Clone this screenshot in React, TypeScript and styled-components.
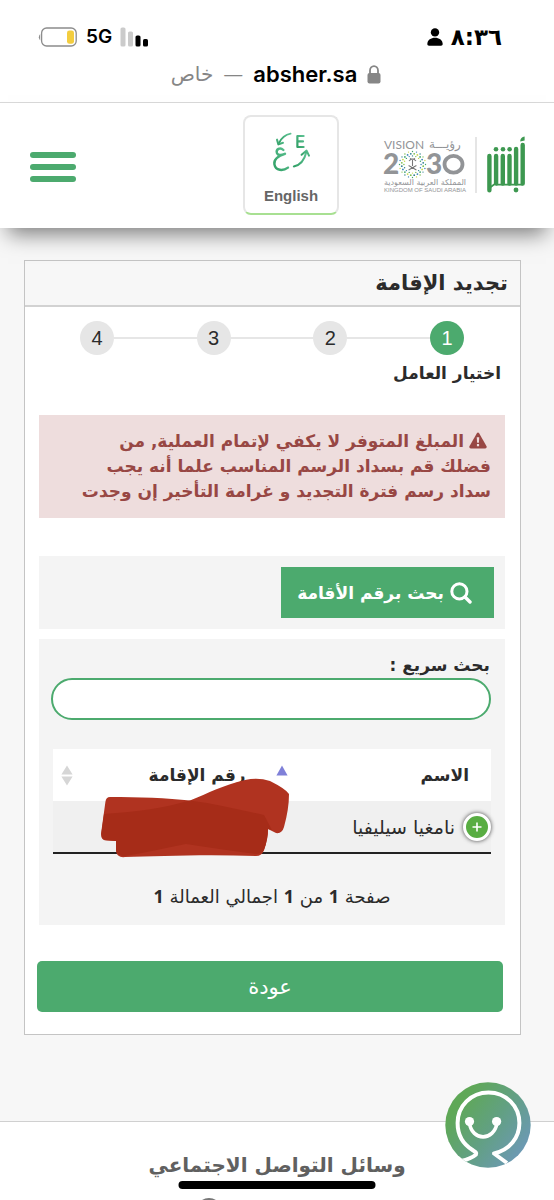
import React from "react";
import styled, { createGlobalStyle } from "styled-components";

const GREEN = "#4caa6e";
const ARABIC = `"DejaVu Sans", "Noto Sans", sans-serif`;

const GlobalStyle = createGlobalStyle`
  * { box-sizing: border-box; }
  body { margin: 0; background: #f7f7f7; color: #2b2b2b; font-family: ${ARABIC}; }
  button, input { font-family: inherit; margin: 0; }
  h1, h2, p, ol { margin: 0; padding: 0; }
`;

const Screen = styled.div`
  height: 100vh;
  overflow: hidden;
  display: flex;
  flex-direction: column;
`;

const BrowserBar = styled.div`
  direction: ltr;
  background: #fff;
  padding: 24px 52px 14px 38px;
  border-bottom: 1px solid #d9d9d9;
  flex: none;
`;

const StatusRow = styled.div`
  display: flex;
  align-items: center;
  justify-content: space-between;
  height: 26px;
`;

const StatusGroup = styled.div`
  display: flex;
  align-items: center;
  gap: 8px;
  color: #000;
`;

const Network = styled.span`
  font: 600 19px/24px Inter, sans-serif;
`;

const Clock = styled.time`
  font: 700 23px/24px ${ARABIC};
`;

const Address = styled.div`
  display: flex;
  align-items: center;
  justify-content: center;
  gap: 10px;
  height: 28px;
  margin-top: 10px;
  padding-left: 12px;
  color: #868686;
  font-size: 20px;
`;

const Host = styled.span`
  font: 600 22px/28px Inter, sans-serif;
  color: #000;
`;

const Header = styled.header`
  position: relative;
  z-index: 2;
  flex: none;
  display: flex;
  align-items: center;
  justify-content: space-between;
  padding: 12px 29px 13px 30px;
  background: #fff;
  box-shadow: 0 14px 20px -8px rgba(0, 0, 0, 0.5);
`;

const Logos = styled.a`
  display: flex;
  align-items: center;
  width: 142px;
  text-decoration: none;
`;

const LanguageButton = styled.button`
  display: flex;
  flex-direction: column;
  align-items: center;
  justify-content: space-between;
  width: 96px;
  height: 100px;
  padding: 14px 0 8px;
  background: #fff;
  border: 2px solid #e6e6e6;
  border-bottom-color: #a8e092;
  border-radius: 8px;
  color: #666;
  font: 700 15px/18px "Liberation Sans", sans-serif;
`;

const MenuSlot = styled.div`
  width: 169px;
  padding-top: 3px;
  display: flex;
  justify-content: flex-end;
`;

const MenuButton = styled.button`
  display: flex;
  flex-direction: column;
  gap: 6px;
  padding: 0;
  border: 0;
  background: none;
`;

const MenuBar = styled.span`
  width: 46px;
  height: 6px;
  border-radius: 3px;
  background: ${GREEN};
`;

const Main = styled.main`
  flex: none;
  padding: 32px 33px 86px 24px;
`;

const Card = styled.section`
  background: #fff;
  border: 1px solid #c4c4c4;
`;

const CardTitle = styled.h1`
  padding: 0 12px;
  background: #f7f7f7;
  border-bottom: 2px solid #d2d2d2;
  font-size: 21px;
  line-height: 44px;
  font-weight: 700;
`;

const CardBody = styled.div`
  padding: 14px 15px 22px 14px;
`;

const Steps = styled.ol`
  display: flex;
  align-items: center;
  padding: 0 41px;
  list-style: none;
`;

const Step = styled.li<{ $current?: boolean }>`
  display: flex;
  align-items: center;
  flex: 1;
  &:first-child { flex: none; }
  &:not(:first-child)::before {
    content: "";
    flex: 1;
    height: 2px;
    background: #e6e6e6;
  }
  span {
    width: 34px;
    border-radius: 50%;
    text-align: center;
    font: 400 20px/34px "Liberation Sans", sans-serif;
    background: ${(p) => (p.$current ? GREEN : "#e6e6e6")};
    color: ${(p) => (p.$current ? "#fff" : "#2b2b2b")};
  }
`;

const StepLabel = styled.p`
  margin-top: 6px;
  padding: 0 4px;
  font-size: 17px;
  line-height: 24px;
  font-weight: 700;
`;

const Alert = styled.div`
  margin-top: 30px;
  padding: 14px 14px 14px 28px;
  background: #eedddd;
  color: #984744;
  font-size: 17px;
  line-height: 25px;
  font-weight: 700;
  svg { vertical-align: -2px; margin: 0 4px 0 5px; }
`;

const Panel = styled.div<{ $gap: number }>`
  margin-top: ${(p) => p.$gap}px;
  padding: 11px;
  background: #f4f4f4;
`;

const SearchButton = styled.button`
  display: flex;
  align-items: center;
  justify-content: center;
  gap: 6px;
  width: 213px;
  height: 51px;
  padding: 0 6px 0 0;
  border: 0;
  background: ${GREEN};
  color: #fff;
  font-size: 17px;
  font-weight: 700;
`;

const FieldLabel = styled.label`
  display: block;
  padding: 3px 4px 1px;
  font-size: 17px;
  line-height: 24px;
  font-weight: 700;
`;

const QuickSearch = styled.input`
  display: block;
  width: calc(100% - 4px);
  height: 42px;
  margin-right: 3px;
  padding: 0 20px;
  border: 2px solid ${GREEN};
  border-radius: 21px;
  background: #fff;
  font-size: 17px;
`;

const TableWrap = styled.div`
  position: relative;
  margin: 29px 3px 0;
`;

const Table = styled.table`
  width: 100%;
  table-layout: fixed;
  border-collapse: collapse;
  border-bottom: 2px solid #222;
  background: #f0f0f0;
  th {
    height: 52px;
    padding: 0 22px 0 8px;
    background: #fff;
    font-size: 17px;
    text-align: right;
  }
  th:first-child { width: 51%; }
  td {
    height: 52px;
    padding: 0;
    font-size: 19px;
  }
`;

const HeadCell = styled.div`
  display: flex;
  align-items: center;
  justify-content: space-between;
  white-space: nowrap;
`;

const NameCell = styled.div`
  display: flex;
  align-items: center;
  gap: 8px;
  white-space: nowrap;
`;

const ExpandButton = styled.button`
  display: grid;
  place-items: center;
  width: 28px;
  height: 28px;
  padding: 0;
  border: 3px solid #fff;
  border-radius: 50%;
  background: #58ad42;
  box-shadow: 0 0 4px #444;
`;

const Scribble = styled.svg`
  position: absolute;
  left: 45px;
  top: 28px;
`;

const PageCount = styled.p`
  padding: 28px 0 3px;
  font-size: 18px;
  line-height: 28px;
  text-align: center;
  b { font-family: "Noto Sans", sans-serif; }
`;

const BackButton = styled.button`
  display: block;
  width: 100%;
  height: 51px;
  margin: 36px 2px 0;
  border: 0;
  border-radius: 5px;
  background: ${GREEN};
  color: #fff;
  font-size: 21px;
`;

const Footer = styled.footer`
  flex: 1 0 auto;
  display: flex;
  flex-direction: column;
  align-items: center;
  gap: 16px;
  padding: 26px 20px 0;
  background: #fff;
  border-top: 1px solid #d0d0d0;
`;

const FooterTitle = styled.h2`
  color: #606060;
  font-size: 20px;
  line-height: 34px;
  font-weight: 700;
`;

const SocialLink = styled.a`
  width: 26px;
  height: 26px;
  margin-right: 136px;
  border: 2px solid #777;
  border-radius: 50%;
`;

const ChatButton = styled.button`
  position: fixed;
  right: 23px;
  bottom: 32px;
  z-index: 3;
  padding: 0;
  border: 0;
  background: none;
  svg { display: block; }
`;

const HomeIndicator = styled.div`
  position: fixed;
  left: 50%;
  bottom: 11px;
  z-index: 3;
  width: 197px;
  height: 8px;
  border-radius: 4px;
  background: #000;
  transform: translateX(-50%);
`;

const Battery = () => (
  <svg width="40" height="20" viewBox="0 0 40 20" aria-hidden="true">
    <rect x="3.6" y="1" width="34.6" height="18" rx="5" fill="none" stroke="#8c8c8c" strokeWidth="1.3" />
    <path d="M2.2 7 A5 5 0 0 0 2.2 13.4 Z" fill="#8c8c8c" />
    <rect x="29" y="3.4" width="7" height="13.4" rx="2.4" fill="#f3cd3f" />
  </svg>
);

const Signal = () => (
  <svg width="29" height="20" viewBox="0 0 29 20" aria-hidden="true">
    <rect x="0.5" y="0.5" width="5" height="19" rx="1.6" fill="#cbcbcb" />
    <rect x="8" y="4.5" width="5" height="15" rx="1.6" fill="#cbcbcb" />
    <rect x="15.5" y="8.5" width="5" height="11" rx="1.6" fill="#000" />
    <rect x="23" y="12" width="5" height="7.5" rx="1.6" fill="#000" />
  </svg>
);

const Person = () => (
  <svg width="16" height="18" viewBox="0 0 16 18" aria-hidden="true">
    <circle cx="8" cy="4.4" r="4.2" />
    <path d="M0.3 16 C0.3 7.5 15.7 7.5 15.7 16 C15.7 17.3 15 17.7 14 17.7 H2 C1 17.7 0.3 17.3 0.3 16 Z" />
  </svg>
);

const Lock = () => (
  <svg width="14" height="19" viewBox="0 0 14 19" aria-hidden="true">
    <rect x="0.5" y="8" width="13" height="10.5" rx="2" fill="#868686" />
    <path d="M3 9 V5.5 A4 4.4 0 0 1 11 5.5 V9" fill="none" stroke="#868686" strokeWidth="1.8" />
  </svg>
);

const AbsherLogo = () => (
  <svg width="38" height="58" viewBox="0 0 38 58" role="img" aria-label="أبشر">
    <g stroke="#3d9850" strokeWidth="4.4" strokeLinecap="round">
      <path d="M2.4 20 V54.2 M9.1 20 V47.6 M15.8 20 V47.6 M22.5 20 V47.6 M29.1 13 V47.6 M35.7 9 V47.6" />
    </g>
    <path d="M2.4 52 L9.1 47 M9.1 48.6 H35.7" stroke="#3d9850" strokeWidth="1.6" />
    <g fill="#3d9850">
      <circle cx="9" cy="13.2" r="2.3" />
      <circle cx="16" cy="13.2" r="2.3" />
      <circle cx="22.6" cy="13.2" r="2.3" />
      <circle cx="29" cy="54" r="2.4" />
      <path d="M33.2 5.2 C33.2 2.8 35 1 37.6 0.6 V4.4 L33.2 5.6 Z" />
    </g>
  </svg>
);

const DOT_COLORS = ["#3fa36b", "#7bbf4c", "#3b82b5", "#c9d64a", "#2f7f8f"];
const rosette = [
  { r: 13, n: 20, size: 0.7 },
  { r: 10.8, n: 20, size: 0.9 },
  { r: 8.6, n: 16, size: 0.7 },
].flatMap((ring, k) =>
  Array.from({ length: ring.n }, (_, i) => {
    const a = ((i + k * 0.5) / ring.n) * Math.PI * 2;
    return {
      x: Math.round((29.5 + Math.cos(a) * ring.r) * 10) / 10,
      y: Math.round((28.5 + Math.sin(a) * ring.r) * 10) / 10,
      r: ring.size,
      fill: DOT_COLORS[(i * 2 + k) % DOT_COLORS.length],
    };
  })
);

const VisionLogo = () => (
  <svg width="104" height="58" viewBox="0 0 104 58" direction="ltr" role="img" aria-label="Vision 2030">
    <g fill="#929497">
      <text x="1" y="13" fontFamily="Lato, sans-serif" fontSize="12">VISION</text>
      <text x="46" y="12" fontFamily="DejaVu Sans, sans-serif" fontSize="12">رؤيـــة</text>
      <text x="0" y="38" fontFamily="Lato, sans-serif" fontWeight="900" fontSize="28">2</text>
      <text x="43" y="38" fontFamily="Lato, sans-serif" fontWeight="900" fontSize="28">3</text>
      <text x="1" y="49" fontFamily="DejaVu Sans, sans-serif" fontSize="8">المملكة العربية السعودية</text>
      <text x="1" y="56" fontFamily="Liberation Sans, sans-serif" fontSize="6">KINGDOM OF SAUDI ARABIA</text>
    </g>
    <ellipse cx="70.5" cy="28.3" rx="9" ry="8.4" fill="none" stroke="#929497" strokeWidth="3.8" />
    {rosette.map((d, i) => (
      <circle key={i} cx={d.x} cy={d.y} r={d.r} fill={d.fill} />
    ))}
    <path
      d="M29.5 24 V30 M26 25 Q29.5 21 33 25 M27 22.6 Q29.5 24 32 22.6 M25.6 34 L33.4 29.6 M33.4 34 L25.6 29.6"
      fill="none"
      stroke="#777"
      strokeWidth="1.1"
    />
    <path d="M93 1 V57" stroke="#d4d4d4" strokeWidth="1.2" />
  </svg>
);

const LanguageIcon = () => (
  <svg width="40" height="42" viewBox="0 0 40 42" aria-hidden="true">
    <defs>
      <linearGradient id="lang" x1="0" y1="1" x2="1" y2="0">
        <stop offset="0" stopColor="#31a066" />
        <stop offset="1" stopColor="#5cc192" />
      </linearGradient>
    </defs>
    <g fill="none" stroke="url(#lang)" strokeLinecap="round" strokeLinejoin="round">
      <path d="M32.6 5 H26.4 V16 H32.6 M26.4 10.4 H32" strokeWidth="2.2" />
      <path d="M19.6 2.6 C14 3.6 10.4 7 8 12" strokeWidth="1.8" />
      <path d="M6 8.6 L7.4 13.4 L12 11.8" strokeWidth="2" />
      <path d="M22.8 35.4 C29.6 34 33.4 29 35.2 21.4" strokeWidth="2" />
      <path d="M30.6 23.8 L35.6 19.6 L38 24.6" strokeWidth="2" />
      <path d="M12.4 19 C9 15.6 4.6 18.4 6 22.2 C7.2 25 11 24 14 22.8 C7 25 2.6 28.2 3.4 33.2 C4.6 40 12 40.2 17 36.6" strokeWidth="2.4" />
    </g>
  </svg>
);

const Warning = () => (
  <svg width="18" height="17" viewBox="0 0 20 18" aria-hidden="true">
    <path d="M8.6 1.2 Q10 -0.8 11.4 1.2 L19.5 15.4 Q20.2 17.6 18 17.8 H2 Q-0.2 17.6 0.5 15.4 Z" fill="#984744" />
    <path d="M8.6 5.4 H11.4 L11 11.6 H9 Z M8.8 13 H11.2 V15.4 H8.8 Z" fill="#eedddd" />
  </svg>
);

const Magnifier = () => (
  <svg width="22" height="22" viewBox="0 0 22 22" aria-hidden="true">
    <circle cx="9.4" cy="9.4" r="7.6" fill="none" stroke="#fff" strokeWidth="3" />
    <path d="M15 15 L20 20" stroke="#fff" strokeWidth="3.4" strokeLinecap="round" />
  </svg>
);

const SortAscending = () => (
  <svg width="12" height="20" viewBox="0 0 12 20" aria-hidden="true">
    <path d="M6 0.5 L11.6 10.5 H0.4 Z" fill="#7f80d8" />
  </svg>
);

const SortBoth = () => (
  <svg width="12" height="21" viewBox="0 0 12 21" aria-hidden="true">
    <path d="M6 0.5 L11.6 9.5 H0.4 Z M6 20.5 L11.6 11.5 H0.4 Z" fill="#d6d6d6" />
  </svg>
);

const Assistant = () => (
  <svg width="86" height="86" viewBox="0 0 86 86" aria-hidden="true">
    <defs>
      <linearGradient id="bot" x1="0.2" y1="0.2" x2="0.95" y2="0.75">
        <stop offset="0" stopColor="#5fa857" />
        <stop offset="0.5" stopColor="#62a083" />
        <stop offset="1" stopColor="#6c99b4" />
      </linearGradient>
      <clipPath id="botClip"><circle cx="43" cy="43" r="42.7" /></clipPath>
    </defs>
    <circle cx="43" cy="43" r="42.7" fill="url(#bot)" />
    <g clipPath="url(#botClip)" fill="none" stroke="#fff" strokeWidth="4">
      <path d="M16 79 C23 77.5 27 76 31 72.5 C32 70.8 30.4 70 27.5 68 C17 61.5 12.6 51 12.6 41 C12.6 24 26 10.4 43.5 10.4 C61 10.4 74.4 24 74.4 41 C74.4 56 64.5 68 49 71.5 L62 81" strokeLinejoin="round" />
      <path d="M24.5 41 C27 59.5 49 59.5 52 41" strokeWidth="3.6" />
      <circle cx="24.5" cy="39.6" r="4.6" fill="#fff" stroke="none" />
      <circle cx="51.6" cy="39.6" r="4.6" fill="#fff" stroke="none" />
    </g>
  </svg>
);

export default function App() {
  return (
    <Screen dir="rtl" lang="ar">
      <GlobalStyle />
      <BrowserBar>
        <StatusRow>
          <StatusGroup>
            <Battery />
            <Network>5G</Network>
            <Signal />
          </StatusGroup>
          <StatusGroup>
            <Person />
            <Clock>٨:٣٦</Clock>
          </StatusGroup>
        </StatusRow>
        <Address>
          <span>خاص</span>
          <span>—</span>
          <Host>absher.sa</Host>
          <Lock />
        </Address>
      </BrowserBar>

      <Header>
        <Logos href="#" aria-label="أبشر">
          <AbsherLogo />
          <VisionLogo />
        </Logos>
        <LanguageButton type="button">
          <LanguageIcon />
          English
        </LanguageButton>
        <MenuSlot>
          <MenuButton type="button" aria-label="القائمة">
            <MenuBar />
            <MenuBar />
            <MenuBar />
          </MenuButton>
        </MenuSlot>
      </Header>

      <Main>
        <Card>
          <CardTitle>تجديد الإقامة</CardTitle>
          <CardBody>
            <Steps>
              {[1, 2, 3, 4].map((n) => (
                <Step key={n} $current={n === 1}>
                  <span>{n}</span>
                </Step>
              ))}
            </Steps>
            <StepLabel>اختيار العامل</StepLabel>

            <Alert role="alert">
              <Warning />
              المبلغ المتوفر لا يكفي لإتمام العملية, من فضلك قم بسداد الرسم المناسب علما أنه يجب سداد رسم فترة التجديد و غرامة التأخير إن وجدت
            </Alert>

            <Panel $gap={38}>
              <SearchButton type="button">
                <Magnifier />
                بحث برقم الأقامة
              </SearchButton>
            </Panel>

            <Panel $gap={10}>
              <FieldLabel htmlFor="quick-search">بحث سريع :</FieldLabel>
              <QuickSearch id="quick-search" type="search" />
              <TableWrap>
                <Table>
                  <thead>
                    <tr>
                      <th scope="col">
                        <HeadCell>الاسم<SortAscending /></HeadCell>
                      </th>
                      <th scope="col">
                        <HeadCell>رقم الإقامة<SortBoth /></HeadCell>
                      </th>
                    </tr>
                  </thead>
                  <tbody>
                    <tr>
                      <td>
                        <NameCell>
                          <ExpandButton type="button" aria-label="تفاصيل">
                            <svg width="10" height="10" viewBox="0 0 10 10" aria-hidden="true">
                              <path d="M5 0.5 V9.5 M0.5 5 H9.5" stroke="#fff" strokeWidth="1.6" />
                            </svg>
                          </ExpandButton>
                          نامغيا سيليفيا
                        </NameCell>
                      </td>
                      <td />
                    </tr>
                  </tbody>
                </Table>
                <Scribble width="194" height="82" viewBox="0 0 194 82" aria-hidden="true">
                  <path d="M12 20 Q8 20 7.4 25 L3 57 Q3 63 8 63.6 L18 64 L18 74 Q19 81 27 80 C60 79 110 77 158 79 Q164 79 166 73 Q170 62 170 52 L178 56 Q184 57 186 50 Q191 32 191 17 Q188 12 172 4 Q160 0 147 3 C126 8 110 16 92 23.6 C70 21 40 20 12 20 Z" fill="#b03320" />
                  <path d="M6 37 C40 35 66 31 92 23.6 C118 27 142 33 166 38 L174 53 L170 52 Q170 62 166 73 Q164 77 158 77 C132 74 110 70 88 67 C66 71 46 76 27 79 Q19 79 18 73 V64 L8 63 Q3 62 3.4 56 Z" fill="#a62c18" />
                </Scribble>
              </TableWrap>
              <PageCount>
                صفحة <b>1</b> من <b>1</b> اجمالي العمالة <b>1</b>
              </PageCount>
            </Panel>

            <BackButton type="button">عودة</BackButton>
          </CardBody>
        </Card>
      </Main>

      <Footer>
        <FooterTitle>وسائل التواصل الاجتماعي</FooterTitle>
        <SocialLink href="#" aria-label="تويتر" />
      </Footer>

      <ChatButton type="button" aria-label="المساعد">
        <Assistant />
      </ChatButton>
      <HomeIndicator />
    </Screen>
  );
}
